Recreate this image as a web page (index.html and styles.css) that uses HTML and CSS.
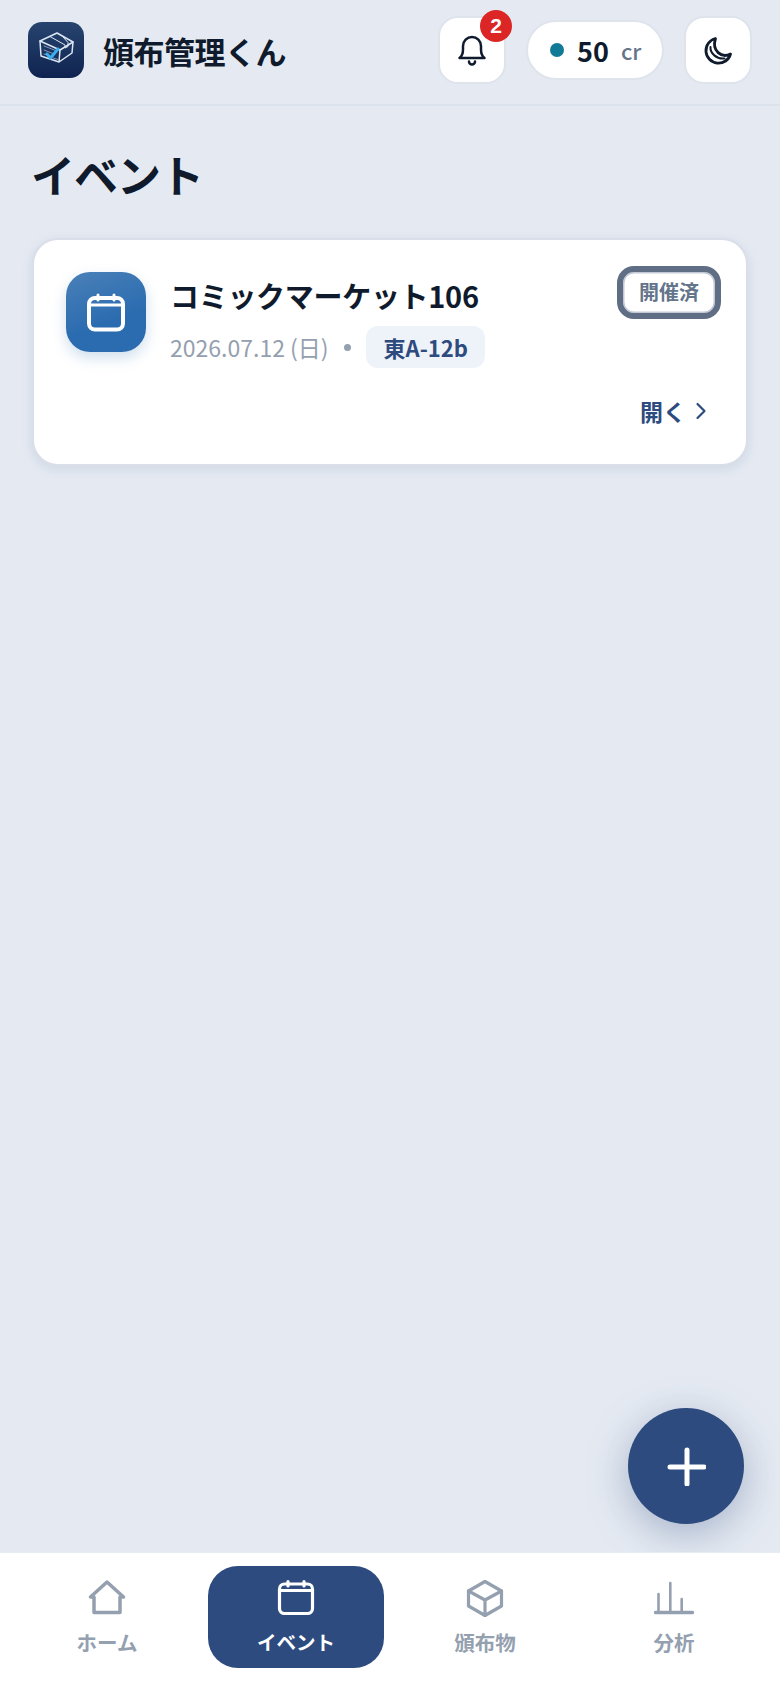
FILE: index.html
```html
<!DOCTYPE html>
<html lang="ja">
<head>
    <meta charset="UTF-8">
    <meta name="viewport" content="width=device-width, initial-scale=1.0">
    <title>頒布管理くん</title>
    <link rel="stylesheet" href="styles.css">
</head>
<body>
    <header class="topbar">
        <div class="brand">
            <div class="logo">
                <svg viewBox="0 0 56 56" width="56" height="56" fill="none" stroke="#dbe6f3" stroke-width="1.5" stroke-linejoin="round" stroke-linecap="round">
                    <path d="M12 19L29 11L45 20L32 28Z"/>
                    <path d="M12 19L13 34L31 40L32 28M45 20L44 31L31 40"/>
                    <path d="M22 14.500L37 23V26L40 24.500V20.500L35 15" stroke-width="1"/>
                    <path d="M16 24L29 29M16 28L26 32M16 32L19 33M25 36L30 37.500" stroke-width=".8" stroke="#9db1cc"/>
                    <path d="M19 32L22.500 36L30 27" stroke="#38b0f0" stroke-width="3"/>
                </svg>
            </div>
            <span class="brand-name">頒布管理くん</span>
        </div>
        <div class="actions">
            <button class="icon-btn bell-btn">
                <svg viewBox="0 0 32 32" width="32" height="32" fill="none" stroke="#0f1b2d" stroke-width="2.500" stroke-linecap="round" stroke-linejoin="round">
                    <path d="M3.500 24h25c-2.600-2-3.500-4.500-3.500-8.500V12a9 9 0 0 0-18 0v3.500c0 4-.9 6.500-3.500 8.500z"/>
                    <path d="M13 27.500a3 3 0 0 0 6 0"/>
                </svg>
                <span class="badge">2</span>
            </button>
            <div class="credit">
                <span class="dot"></span>
                <span class="credit-num">50</span>
                <span class="credit-unit">cr</span>
            </div>
            <button class="icon-btn">
                <svg viewBox="0 0 32 32" width="32" height="32" fill="none" stroke="#0f1b2d" stroke-width="2.800" stroke-linecap="round" stroke-linejoin="round">
                    <path d="M13.500 4.500a12.500 12.500 0 1 0 15 15.500C19.500 24.500 9.500 17 13.500 4.500z"/>
                    <path d="M8.500 13c-.5 6 6 12.500 14 11.500" stroke-width="2"/>
                </svg>
            </button>
        </div>
    </header>

    <main class="content">
        <h1>イベント</h1>
        <div class="event-card">
            <div class="event-top">
                <div class="event-icon">
                    <svg viewBox="0 0 40 40" width="40" height="40" fill="none" stroke="#fff" stroke-width="4" stroke-linecap="round" stroke-linejoin="round">
                        <rect x="3" y="6" width="34" height="31.500" rx="6"/>
                        <path d="M3 13h34M12 3v5M28 3v5" stroke-width="3"/>
                    </svg>
                </div>
                <div class="event-info">
                    <div class="event-name">コミックマーケット106</div>
                    <div class="event-meta">
                        <span>2026.07.12 (日)</span>
                        <span class="sep"></span>
                        <span class="chip">東A-12b</span>
                    </div>
                </div>
                <span class="status">開催済</span>
            </div>
            <div class="event-bottom">
                <span class="open-link">開く</span>
                <svg viewBox="0 0 12 20" width="12" height="20" fill="none" stroke="#2d4b7e" stroke-width="2.200" stroke-linecap="round" stroke-linejoin="round">
                    <path d="M2.500 3l7 7-7 7"/>
                </svg>
            </div>
        </div>
    </main>

    <button class="fab">
        <svg viewBox="0 0 40 40" width="40" height="40" fill="none" stroke="#fff" stroke-width="5" stroke-linecap="round">
            <path d="M21 4v34M4 21h34"/>
        </svg>
    </button>

    <nav class="bottom-nav">
        <a class="nav-item">
            <svg viewBox="0 0 40 40" width="40" height="40" fill="none" stroke="#94a0af" stroke-width="3.500" stroke-linejoin="round" stroke-linecap="round">
                <path d="M3.500 19L20 4l16.500 15H33v15.500H7V19z"/>
            </svg>
            <span>ホーム</span>
        </a>
        <a class="nav-item active">
            <svg viewBox="0 0 40 40" width="40" height="40" fill="none" stroke="#fff" stroke-width="3.200" stroke-linecap="round" stroke-linejoin="round">
                <rect x="3.500" y="6" width="33" height="29.500" rx="5"/>
                <path d="M3.500 12.500h33M12 3.500V8M28 3.500V8"/>
            </svg>
            <span>イベント</span>
        </a>
        <a class="nav-item">
            <svg viewBox="0 0 40 40" width="40" height="40" fill="none" stroke="#94a0af" stroke-width="3.200" stroke-linejoin="round" stroke-linecap="round">
                <path d="M20 3.500L36.500 13v15L20 37.500 3.500 28V13z"/>
                <path d="M3.500 13L20 22l16.500-9M20 22v15.500"/>
            </svg>
            <span>頒布物</span>
        </a>
        <a class="nav-item">
            <svg viewBox="0 0 40 40" width="40" height="40" fill="none" stroke="#94a0af" stroke-width="2.600" stroke-linecap="round">
                <path d="M4.500 33V16M16.300 33V5M27.700 33V21"/>
                <path d="M1.500 34.500h37" stroke-width="3.400"/>
            </svg>
            <span>分析</span>
        </a>
    </nav>
</body>
</html>
```

FILE: styles.css
```css
* {
    box-sizing: border-box;
}

body {
    font-family: "Noto Sans CJK JP", "Noto Sans", sans-serif;
    background-color: #e5eaf2;
    color: #0f1b2d;
    margin: 0;
    width: 780px;
    height: 1688px;
    display: flex;
    flex-direction: column;
    position: relative;
    overflow: hidden;
}

/* Top bar */
.topbar {
    height: 106px;
    flex-shrink: 0;
    display: flex;
    justify-content: space-between;
    align-items: center;
    padding: 0 28px 4px 28px;
    border-bottom: 2px solid #dde3ec;
}

.brand {
    display: flex;
    align-items: center;
    gap: 19px;
}

.logo {
    width: 56px;
    height: 56px;
    border-radius: 14px;
    background: linear-gradient(180deg, #27446f, #0f2350);
}

.logo svg {
    display: block;
}

.brand-name {
    font-size: 31px;
    font-weight: 700;
    letter-spacing: -0.5px;
}

.actions {
    display: flex;
    align-items: center;
    gap: 20px;
}

.icon-btn {
    width: 68px;
    height: 68px;
    border: 2px solid #dfe4ec;
    border-radius: 20px;
    background-color: white;
    display: flex;
    align-items: center;
    justify-content: center;
    padding: 0;
}

.bell-btn {
    position: relative;
}

.badge {
    position: absolute;
    top: -8px;
    right: -8px;
    width: 32px;
    height: 32px;
    border-radius: 50%;
    background-color: #dc2626;
    color: white;
    font-size: 21px;
    font-weight: 700;
    line-height: 32px;
    text-align: center;
}

.credit {
    width: 138px;
    height: 60px;
    background-color: white;
    border: 2px solid #dfe4ec;
    border-radius: 30px;
    display: flex;
    align-items: center;
    padding-left: 22px;
}

.dot {
    width: 14px;
    height: 14px;
    border-radius: 50%;
    background-color: #117a96;
    margin-right: 13px;
}

.credit-num {
    font-size: 27px;
    font-weight: 700;
    margin-right: 12px;
}

.credit-unit {
    font-size: 22px;
    font-weight: 500;
    color: #64748b;
}

/* Main content */
.content {
    flex: 1;
    padding: 36px 32px 0 32px;
}

.content h1 {
    font-size: 44px;
    font-weight: 700;
    line-height: 64px;
    margin: 0 0 32px -1px;
    letter-spacing: -1px;
}

.event-card {
    width: 716px;
    height: 228px;
    background-color: white;
    border: 2px solid #d9dee8;
    border-radius: 26px;
    box-shadow: 0 3px 12px rgba(45, 75, 126, 0.12);
    padding: 32px 25px 0 32px;
}

.event-top {
    display: flex;
    align-items: flex-start;
}

.event-icon {
    width: 80px;
    height: 80px;
    flex-shrink: 0;
    border-radius: 24px;
    background: linear-gradient(160deg, #4a80b8, #2b6cb0 60%);
    box-shadow: 0 6px 14px rgba(43, 108, 176, 0.22);
    display: flex;
    align-items: center;
    justify-content: center;
    margin-right: 24px;
}

.event-info {
    flex: 1;
    padding-top: 1px;
}

.event-name {
    font-size: 29px;
    font-weight: 700;
    line-height: 44px;
    letter-spacing: -0.3px;
}

.event-meta {
    display: flex;
    align-items: center;
    font-size: 23px;
    color: #94a0af;
    margin-top: 9px;
}

.sep {
    width: 7px;
    height: 7px;
    border-radius: 50%;
    background-color: #94a0af;
    margin: 0 15px;
}

.chip {
    height: 42px;
    padding: 0 17px 0 18px;
    border-radius: 12px;
    background-color: #eef2f9;
    color: #2d4b7e;
    font-size: 22px;
    font-weight: 700;
    line-height: 42px;
}

.status {
    width: 104px;
    height: 53px;
    margin-top: -6px;
    border: 6px solid #5f6e85;
    border-radius: 17px;
    box-shadow: inset 0 0 0 1.500px #c3cad6;
    color: #64748b;
    font-size: 20px;
    font-weight: 700;
    line-height: 40px;
    text-align: center;
}

.event-bottom {
    display: flex;
    justify-content: flex-end;
    align-items: center;
    gap: 9px;
    margin-top: 26px;
    padding-right: 14px;
}

.open-link {
    color: #2d4b7e;
    font-size: 23px;
    font-weight: 700;
}

/* Floating button */
.fab {
    position: absolute;
    top: 1408px;
    left: 628px;
    width: 116px;
    height: 116px;
    border: none;
    border-radius: 50%;
    background-color: #2d4b7e;
    box-shadow: 0 10px 40px rgba(45, 75, 126, 0.35);
    display: flex;
    align-items: center;
    justify-content: center;
    padding: 0;
}

/* Bottom nav */
.bottom-nav {
    height: 136px;
    flex-shrink: 0;
    position: relative;
    background-color: white;
    border-top: 1px solid #e6ebf2;
    display: grid;
    grid-template-columns: repeat(4, 176px);
    column-gap: 13px;
    padding: 13px 19px 0;
}

.nav-item {
    height: 102px;
    border-radius: 30px;
    display: flex;
    flex-direction: column;
    align-items: center;
    padding-top: 12px;
    color: #94a0af;
    font-size: 20.500px;
    font-weight: 700;
    line-height: 30px;
    gap: 9px;
}

.nav-item.active {
    background-color: #2d4b7e;
    color: white;
    font-size: 19.500px;
}
```
